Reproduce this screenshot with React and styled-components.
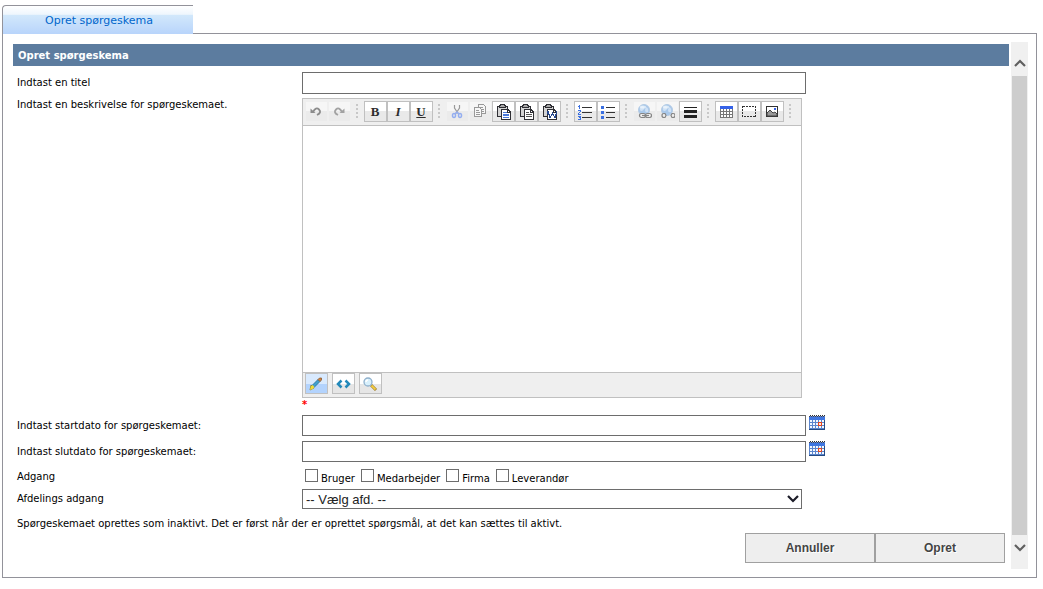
import React from "react";
import styled, { createGlobalStyle } from "styled-components";

const toolGroups = [
  [
    { name: "Fortryd", icon: "undo", off: true },
    { name: "Gendan", icon: "redo", off: true },
  ],
  [
    { name: "Fed", text: "B" },
    { name: "Kursiv", text: "I", italic: true },
    { name: "Understreget", text: "U", underline: true },
  ],
  [
    { name: "Klip", icon: "cut", off: true },
    { name: "Kopier", icon: "copy", off: true },
    { name: "Indsæt", icon: "paste" },
    { name: "Indsæt som tekst", icon: "pasteText" },
    { name: "Indsæt fra Word", icon: "pasteWord" },
  ],
  [
    { name: "Nummereret liste", icon: "numbers" },
    { name: "Punktliste", icon: "bullets" },
  ],
  [
    { name: "Indsæt link", icon: "link", off: true },
    { name: "Fjern link", icon: "unlink", off: true },
    { name: "Vandret linje", icon: "rule" },
  ],
  [
    { name: "Tabel", icon: "table" },
    { name: "Ramme", icon: "frame" },
    { name: "Billede", icon: "image" },
  ],
];

const modes = [
  { name: "Design", icon: "pencil", active: true },
  { name: "HTML", icon: "code" },
  { name: "Vis", icon: "search" },
];

const accessItems = ["Bruger", "Medarbejder", "Firma", "Leverandør"];

const Clipboard = ({ children }) => (
  <g transform="translate(1 0)">
    <path d="M1 2h11v11H1z" fill="#2e2e33" />
    <path d="M2 3h9v9H2z" fill="#d4d4d4" />
    <path d="M4 0h5v1h1v3H3V1h1z" fill="#2e2e33" />
    <path d="M5 1h3v1h1v1H4V2h1z" fill="#a9a9a9" />
    <path d="M5 5h7l3 3v8H5z" fill="#2e2e33" />
    <path d="M6 6h5v3h3v6H6z" fill="#fff" />
    <path d="M12 7h1v1h-1z" fill="#fff" />
    {children}
  </g>
);

const Globe = () => (
  <>
    <circle cx="8" cy="6" r="5.5" fill="#a9c8ea" stroke="#b4cbe4" />
    <path d="M4 3.500Q7 1 8 3T6 7Q3 7 4 3.500zM10 3q3 1 2 5q-3 1-3-2z" fill="#cfe2f6" />
    <ellipse cx="7" cy="3" rx="3" ry="1.500" fill="#f4f9fd" opacity=".7" />
  </>
);

const icons = {
  undo: (
    <>
      <path d="M5 8Q8 2.500 11 5.500T9 11" fill="none" stroke="#8c8c8c" strokeWidth="1.800" />
      <path d="M2.500 4.500V9H7.500z" fill="#8c8c8c" />
    </>
  ),
  redo: (
    <>
      <path d="M11 8Q8 2.500 5 5.500T7 11" fill="none" stroke="#a2a2a2" strokeWidth="1.800" />
      <path d="M13.500 4.500V9H8.500z" fill="#a2a2a2" />
    </>
  ),
  cut: (
    <>
      <path d="M5.500 1v3l4 6M10.500 1v3l-4 6" fill="none" stroke="#999" strokeWidth="1.200" />
      <ellipse cx="5" cy="11.500" rx="1.500" ry="2" fill="none" stroke="#94aef0" strokeWidth="1.500" />
      <ellipse cx="11" cy="11.500" rx="1.500" ry="2" fill="none" stroke="#94aef0" strokeWidth="1.500" />
      <path d="M6 10l2-2 2 2" fill="none" stroke="#94aef0" strokeWidth="1.500" />
    </>
  ),
  copy: (
    <g fill="#f7f7f7" stroke="#999">
      <path d="M6.500 .500h5l2 2v7h-7z" />
      <path d="M2.500 3.500h5l2 2v7h-7z" />
      <path d="M4 6.500h3M4 8.500h4M4 10.500h4M8 3.500h3M10 5.500h2M10 7.500h2" />
    </g>
  ),
  paste: (
    <Clipboard>
      <path d="M7 8h4v1H7zM7 10h6v2H7zM7 13h6v1H7z" fill="#4a78d8" />
    </Clipboard>
  ),
  pasteText: (
    <Clipboard>
      <path d="M7 8h3v1H7zM7 10h6v1H7zM7 12h6v1H7z" fill="#555" />
    </Clipboard>
  ),
  pasteWord: (
    <Clipboard>
      <path
        d="M5 7h2v3h1v2h1v-2h1V8h1v2h1v2h1v-2h1V7h1v4h-1v3h-2v-2h-1v-1h-1v1H9v2H7v-3H6v-1H5z"
        fill="#24478f"
      />
    </Clipboard>
  ),
  numbers: (
    <>
      <path
        d="M2 1h1v4H2zM1 2h1v1H1zM1 6h3v2H3v1H2v1h2v1H1V9h1V8h1V7H1zM1 12h3v4H1v-1h2v-1H2v-1h1H1z"
        fill="#3a6fe0"
      />
      <path d="M5 3h10v1H5zM5 8h10v1H5zM5 13h10v1H5z" fill="#333" />
    </>
  ),
  bullets: (
    <>
      <path d="M1 2h3v3H1zM1 7h3v3H1zM1 12h3v3H1z" fill="#3a6fe0" />
      <path d="M6 3h9v1H6zM6 8h9v1H6zM6 13h9v1H6z" fill="#333" />
    </>
  ),
  link: (
    <>
      <Globe />
      <g fill="none" stroke="#858585" strokeWidth="1.200">
        <rect x="3.500" y="9.500" width="6" height="4" rx="2" fill="#eee" />
        <rect x="9.500" y="9.500" width="6" height="4" rx="2" fill="#eee" />
        <path d="M6 11.500h7" />
      </g>
    </>
  ),
  unlink: (
    <>
      <Globe />
      <g fill="none" stroke="#858585" strokeWidth="1.200">
        <path d="M5 9.500q-2 0-2 2t2 2h1l1-2-1-2z" fill="#eee" />
        <path d="M13 9.500l-1 2 1 2h1q2 0 2-2t-2-2z" fill="#eee" />
      </g>
    </>
  ),
  rule: <path d="M2 3h13v1H2zM2 6h13v3H2zM2 11h13v3H2z" fill="#222" />,
  table: (
    <>
      <path d="M2 4h13v10H2z" fill="#777" />
      <path
        d="M3 5h2v2H3zM6 5h2v2H6zM9 5h2v2H9zM12 5h2v2h-2zM3 8h2v2H3zM6 8h2v2H6zM9 8h2v2H9zM12 8h2v2h-2zM3 11h2v2H3zM6 11h2v2H6zM9 11h2v2H9zM12 11h2v2h-2z"
        fill="#fff"
      />
      <path d="M2 2h13v3H2z" fill="#3562e8" />
    </>
  ),
  frame: (
    <rect
      x="1.500"
      y="2.500"
      width="13"
      height="10"
      fill="none"
      stroke="#333"
      strokeDasharray="2 1"
    />
  ),
  image: (
    <>
      <path d="M2 2h12v11H2z" fill="#333" />
      <path d="M3 3h10v9H3z" fill="#fff" />
      <path d="M3 9l3-3 3 3 2-1 2 2v2H3z" fill="#999" stroke="#444" />
      <path d="M10 4h2v2h-2z" fill="#3562e8" />
    </>
  ),
  pencil: (
    <>
      <path d="M2 14l1-5 3 3z" fill="#e6d23c" stroke="#907d29" strokeWidth=".8" />
      <path d="M4 9.500l6-6 2 2-6 6z" fill="#3fa0ce" stroke="#286a91" strokeWidth=".8" />
      <path d="M3 10.500l1.500-1.500 2 2L5 12.500 2 14z" fill="#f2db36" />
      <path d="M10 3.500l1.500-1.500h2V4L12 5.500z" fill="#cf8442" stroke="#8d5b30" strokeWidth=".8" />
    </>
  ),
  code: (
    <g fill="none" stroke="#2389ba" strokeWidth="2.500">
      <path d="M6.500 4.500L3 8l3.500 3.500M10.500 4.500L14 8l-3.500 3.500" />
    </g>
  ),
  search: (
    <>
      <path d="M9 9l5 5" stroke="#997a28" strokeWidth="3" />
      <path d="M9.500 9.500l4 4" stroke="#f3cc42" strokeWidth="1.800" />
      <circle cx="6" cy="6" r="4" fill="#d8f0fc" stroke="#8fb0cc" strokeWidth="1.300" />
      <path d="M4 6q0-2 2-2" fill="none" stroke="#fff" strokeWidth="1.500" />
    </>
  ),
  calendar: (
    <>
      <path d="M0 1h16v14H0z" fill="#5b85cc" />
      <path d="M0 2h16v3H0z" fill="#3f76e0" />
      <path
        d="M1 5h2v2H1zM4 5h2v2H4zM7 5h2v2H7zM10 5h2v2h-2zM13 5h2v2h-2zM1 8h2v2H1zM4 8h2v2H4zM7 8h2v2H7zM10 8h2v2h-2zM13 8h2v2h-2zM1 11h2v2H1zM4 11h2v2H4zM7 11h2v2H7zM10 11h2v2h-2zM13 11h2v2h-2z"
        fill="#f4f8ff"
      />
      <path d="M0 14h16v1H0zM15 5h1v10h-1z" fill="#264b83" />
      <path d="M9 7h4v4H9z" fill="#e4461f" />
      <path d="M10 8h2v2h-2z" fill="#ffe5dc" />
      <path d="M1 .500h15" stroke="#333" strokeDasharray="1 1" />
      <path d="M0 1.500h16" stroke="#445" strokeDasharray="1 1" />
    </>
  ),
};

const smoothIcons = ["undo", "redo", "cut", "link", "unlink", "pencil", "code", "search", "image"];

const Icon = ({ name }) => (
  <IconSvg
    viewBox="0 0 16 16"
    shapeRendering={smoothIcons.includes(name) ? "auto" : "crispEdges"}
    aria-hidden="true"
  >
    {icons[name]}
  </IconSvg>
);

const Chevron = ({ up, color }) => (
  <svg width="12" height="8" viewBox="0 0 12 8" aria-hidden="true">
    <path
      d={up ? "M1 7l5-5 5 5" : "M1 1l5 5 5-5"}
      fill="none"
      stroke={color}
      strokeWidth="2.200"
    />
  </svg>
);

const DateRow = ({ id, label }) => (
  <Row $gap={5}>
    <Label htmlFor={id}>{label}</Label>
    <TextInput id={id} type="text" />
    <CalendarButton type="button" aria-label="Vælg dato">
      <Icon name="calendar" />
    </CalendarButton>
  </Row>
);

const App = () => {
  return (
    <Page>
      <GlobalStyle />
      <Tab href="#opret">Opret spørgeskema</Tab>
      <Panel id="opret">
        <Content>
          <Header>Opret spørgeskema</Header>
          <Row $gap={4}>
            <Label htmlFor="titel">Indtast en titel</Label>
            <TextInput id="titel" type="text" $tall />
          </Row>
          <Row $top>
            <Label htmlFor="beskrivelse">Indtast en beskrivelse for spørgeskemaet.</Label>
            <div>
              <Editor>
                <Toolbar>
                  {toolGroups.map((group) => (
                    <ToolGroup key={group[0].name}>
                      {group.map((tool) => (
                        <ToolButton
                          key={tool.name}
                          type="button"
                          aria-label={tool.name}
                          $off={tool.off}
                          $italic={tool.italic}
                          $underline={tool.underline}
                        >
                          {tool.text || <Icon name={tool.icon} />}
                        </ToolButton>
                      ))}
                      <Separator />
                    </ToolGroup>
                  ))}
                </Toolbar>
                <EditorText id="beskrivelse" />
                <ModeBar>
                  {modes.map((mode) => (
                    <ModeButton
                      key={mode.name}
                      type="button"
                      aria-label={mode.name}
                      $active={mode.active}
                    >
                      <Icon name={mode.icon} />
                    </ModeButton>
                  ))}
                </ModeBar>
              </Editor>
              <Required>*</Required>
            </div>
          </Row>
          <DateRow id="start" label="Indtast startdato for spørgeskemaet:" />
          <DateRow id="slut" label="Indtast slutdato for spørgeskemaet:" />
          <Row as="fieldset" $gap={2}>
            <Label as="legend">Adgang</Label>
            <Checks>
              {accessItems.map((item) => (
                <Check key={item}>
                  <CheckInput type="checkbox" />
                  <span>{item}</span>
                </Check>
              ))}
            </Checks>
          </Row>
          <Row>
            <Label htmlFor="afdeling">Afdelings adgang</Label>
            <SelectWrapper>
              <Select id="afdeling">
                <option>-- Vælg afd. --</option>
              </Select>
              <SelectArrow>
                <Chevron color="#1c1c28" />
              </SelectArrow>
            </SelectWrapper>
          </Row>
          <Note>
            Spørgeskemaet oprettes som inaktivt. Det er først når der er oprettet spørgsmål, at det
            kan sættes til aktivt.
          </Note>
          <Actions>
            <ActionButton type="button">Annuller</ActionButton>
            <ActionButton type="button">Opret</ActionButton>
          </Actions>
        </Content>
        <Scrollbar>
          <ScrollButton type="button" aria-label="Rul op">
            <Chevron up color="#606060" />
          </ScrollButton>
          <Thumb />
          <ScrollButton type="button" aria-label="Rul ned">
            <Chevron color="#606060" />
          </ScrollButton>
        </Scrollbar>
      </Panel>
    </Page>
  );
};

const GlobalStyle = createGlobalStyle`
  * {
    box-sizing: border-box;
  }
  body {
    margin: 0;
    background-color: #fff;
    color: #000;
    font-family: Verdana, "DejaVu Sans", sans-serif;
    font-size: 10px;
  }
`;

const Page = styled.div`
  display: flex;
  flex-direction: column;
  padding: 5px 6px 11px 2px;
`;

const Tab = styled.a`
  width: 191px;
  height: 29px;
  margin-bottom: -1px;
  padding-left: 2px;
  z-index: 1;
  border: 1px solid #92929a;
  border-width: 1px 0 0 1px;
  border-top-left-radius: 4px;
  background: linear-gradient(#fff, #eef6fd 30%, #d2e8fb 32%, #b8d4fb);
  color: #0066cc;
  font-size: 11px;
  line-height: 30px;
  text-align: center;
  text-decoration: none;
`;

const Panel = styled.main`
  display: flex;
  gap: 2px;
  padding: 8px 8px 8px 10px;
  border: 1px solid #92929a;
`;

const Content = styled.form`
  flex: 1;
  padding: 2px 0 6px;
`;

const Header = styled.h1`
  margin: 0 0 6px;
  padding: 2px 5px 0;
  background-color: #5c7c9f;
  color: #fff;
  font-size: 10px;
  line-height: 20px;
`;

const Row = styled.div`
  display: flex;
  align-items: ${(props) => (props.$top ? "flex-start" : "center")};
  margin: 0 0 ${(props) => props.$gap || 0}px;
  padding: 0;
  border: 0;
`;

const Label = styled.label`
  float: left;
  flex: none;
  width: 289px;
  padding-left: 4px;
  line-height: 14px;
`;

const TextInput = styled.input`
  width: 504px;
  height: ${(props) => (props.$tall ? 22 : 21)}px;
  border: 1px solid #6d6d6d;
  background-color: #fff;
`;

const Editor = styled.div`
  width: 500px;
  border: 1px solid #c0c0c0;
`;

const Toolbar = styled.div`
  display: flex;
  height: 27px;
  padding: 2px;
  border-bottom: 1px solid #c0c0c0;
  background-color: #efefef;
`;

const ToolGroup = styled.div`
  display: flex;
`;

const ToolButton = styled.button`
  display: grid;
  justify-content: center;
  width: 23px;
  height: 21px;
  padding: 2px 3px 0 2px;
  border: 1px solid ${(props) => (props.$off ? "transparent" : "#c0c0c0")};
  background: ${(props) =>
    props.$off
      ? "linear-gradient(#f6f6f6 50%, #ebebeb 50%) padding-box"
      : "linear-gradient(#fff 50%, #e9e9e9 50%)"};
  color: #2d2d2d;
  font: bold 13px/15px "Liberation Serif", serif;
  font-style: ${(props) => (props.$italic ? "italic" : "normal")};
  text-decoration: ${(props) => (props.$underline ? "underline" : "none")};
`;

const Separator = styled.span`
  width: 2px;
  height: 15px;
  margin: 3px 6px 0 5px;
  background: repeating-linear-gradient(#c8c8c8 0 2px, #efefef 2px 4px);
`;

const IconSvg = styled.svg`
  display: block;
  width: 16px;
  height: 16px;
`;

const EditorText = styled.textarea`
  display: block;
  width: 100%;
  height: 246px;
  border: 0;
  background-color: #fff;
  resize: none;
`;

const ModeBar = styled.div`
  display: flex;
  gap: 4px;
  height: 25px;
  padding: 0 2px;
  border-top: 1px solid #c0c0c0;
  background-color: #efefef;
`;

const ModeButton = styled.button`
  display: grid;
  justify-content: center;
  width: 23px;
  height: 21px;
  padding: 2px 3px 0 2px;
  border: 1px solid #c0c0c0;
  background: ${(props) =>
    props.$active
      ? "linear-gradient(#d9eafe 50%, #b3d3fd 50%)"
      : "linear-gradient(#fff 50%, #e6e6e6 50%)"};
`;

const Required = styled.div`
  padding-bottom: 3px;
  color: #f00;
  font-weight: bold;
  line-height: 14px;
`;

const CalendarButton = styled.button`
  align-self: flex-start;
  margin-left: 3px;
  padding: 0;
  border: 0;
  background: none;
`;

const Checks = styled.div`
  display: flex;
  height: 20px;
`;

const Check = styled.label`
  display: flex;
  gap: 3px;
  padding: 2px 3px;
  line-height: 19px;
`;

const CheckInput = styled.input`
  appearance: none;
  width: 13px;
  height: 13px;
  margin: 0;
  border: 1px solid #6d6d6d;
  background-color: #fff;
  &:checked {
    background-color: #6d6d6d;
  }
`;

const SelectWrapper = styled.div`
  position: relative;
  width: 500px;
`;

const Select = styled.select`
  display: block;
  appearance: none;
  width: 100%;
  height: 20px;
  padding: 0 3px;
  border: 1px solid #6d6d6d;
  border-radius: 0;
  background-color: #fff;
  color: #222;
  font: 13px "Liberation Sans", Arial, sans-serif;
`;

const SelectArrow = styled.span`
  position: absolute;
  top: 6px;
  right: 3px;
  line-height: 0;
  pointer-events: none;
`;

const Note = styled.p`
  margin: 8px 0 2px;
  padding-left: 4px;
  line-height: 14px;
`;

const Actions = styled.div`
  display: flex;
  justify-content: flex-end;
  padding-right: 4px;
`;

const ActionButton = styled.button`
  width: 130px;
  height: 30px;
  border: 1px solid #a0a0a0;
  background-color: #eee;
  color: #444;
  font: bold 12px "Liberation Sans", Arial, sans-serif;
  text-shadow: 1px 1px #fff;
`;

const Scrollbar = styled.div`
  display: flex;
  flex-direction: column;
  width: 17px;
  padding: 0 1px;
  background-color: #f0f0f0;
`;

const ScrollButton = styled.button`
  display: grid;
  place-content: center;
  height: 34px;
  padding: 8px 0 0;
  border: 0;
  background: none;
  &:last-child {
    padding: 0 0 8px;
  }
`;

const Thumb = styled.div`
  flex: 1;
  background-color: #cdcdcd;
`;

export default App;
